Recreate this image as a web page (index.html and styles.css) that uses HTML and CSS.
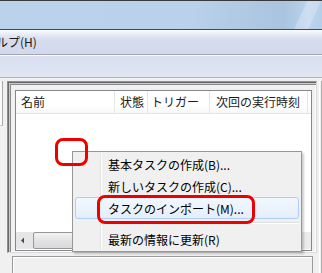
FILE: index.html
```html
<!DOCTYPE html>
<html lang="ja">
<head>
<meta charset="utf-8">
<link rel="stylesheet" href="styles.css">
</head>
<body>
<div class="window">
  <div class="titlebar"><div class="streak"></div></div>
  <div class="menubar"><span class="menu-item">ヘルプ(H)</span></div>
  <div class="toolbar"></div>
  <div class="content">
    <div class="leftpane"></div>
    <div class="results">
      <div class="listframe">
        <div class="listview">
          <div class="header">
            <div class="col c1">名前</div>
            <div class="col c2">状態</div>
            <div class="col c3">トリガー</div>
            <div class="col c4">次回の実行時刻</div>
            <div class="col c5"></div>
          </div>
          <div class="body"></div>
          <div class="hscroll">
            <div class="arrow left"><svg width="17" height="17" viewBox="0 0 17 17"><path d="M5 8.5 L8 5.5 L8 11.5 Z" fill="#4a4a4a"/></svg></div>
            <div class="thumb"></div>
            <div class="track"></div>
            <div class="arrow right"></div>
          </div>
        </div>
      </div>
      <div class="detailpane"></div>
    </div>
    <div class="rightpane"></div>
  </div>

  <div class="ctxmenu">
    <div class="gutter"></div>
    <div class="mi">基本タスクの作成(B)...</div>
    <div class="mi">新しいタスクの作成(C)...</div>
    <div class="mi hot">タスクのインポート(M)...</div>
    <div class="msep"></div>
    <div class="mi">最新の情報に更新(R)</div>
  </div>

  <div class="mark mark1"></div>
  <div class="mark mark2"></div>
</div>
</body>
</html>
```
FILE: styles.css
```css
* { box-sizing: border-box; }
html, body { margin: 0; padding: 0; }
body {
  width: 322px;
  height: 273px;
  overflow: hidden;
  background: #f0f0f0;
  font-family: "Noto Sans CJK JP", "Noto Sans", sans-serif;
  font-size: 12px;
  color: #000;
}
.window { position: relative; width: 322px; height: 273px; overflow: hidden; }

.titlebar {
  position: relative;
  height: 30px;
  border-top: 1px solid #3a3a3a;
  border-bottom: 1px solid #404b5a;
  background: linear-gradient(90deg, #bad2ea 0%, #b9d1ea 60%, #a9c4df 88%, #bcd4ec 96%, #b6cfe8 100%);
  overflow: hidden;
}
.streak {
  position: absolute;
  right: 10px; top: -10px;
  width: 14px; height: 60px;
  background: rgba(255,255,255,0.25);
  transform: skewX(-25deg);
}

.menubar {
  height: 25px;
  background: linear-gradient(#fbfcfe 0%, #e2e6f2 25%, #d5dbed 45%, #d3d9ec 100%);
  border-bottom: 1px solid #a3a6b2;
  display: flex;
  align-items: center;
  white-space: nowrap;
}
.menu-item { margin-left: -16px; line-height: 16px; color: #1a1a1a; }

.toolbar {
  height: 23px;
  border-top: 1px solid #fbfbfe;
  border-bottom: 1px solid #aeb2c3;
  background: linear-gradient(#d8dff0, #e2e6f4);
}

.content {
  display: flex;
  height: 195px;
  padding-top: 3px;
}
.leftpane {
  width: 3px;
  height: 45px;
  background: #fafafa;
  border-right: 1px solid #a8a8a8;
  border-bottom: 1px solid #c8c8c8;
}
.results {
  margin-left: 4px;
  width: 310px;
  display: flex;
  flex-direction: column;
}
.listframe {
  height: 172px;
  flex: none;
  border: 1px solid #8e8e8e;
  border-right-color: #d8d8d8;
  border-bottom-color: #d8d8d8;
  box-shadow: inset 1px 1px 0 #6a6a6a, inset 2px 2px 0 #c8c8c8, inset 3px 3px 0 #8a8a8a, inset -1px -1px 0 #ffffff;
  padding: 8px 4px 1px 7px;
  background: #f0f0f0;
}
.listview {
  height: 100%;
  background: #fff;
  border: 1px solid #828790;
  display: flex;
  flex-direction: column;
}
.header {
  display: flex;
  height: 23px;
  background: linear-gradient(#ffffff, #ffffff 60%, #f7f8fa);
  border-bottom: 1px solid #e5e5e5;
  flex: none;
}
.col {
  height: 100%;
  line-height: 22px;
  border-right: 1px solid #e3e6eb;
  white-space: nowrap;
  overflow: hidden;
  color: #1b1b1b;
}
.c1 { width: 99px; padding-left: 5px; }
.c2 { width: 33px; padding-left: 5px; }
.c3 { width: 62px; padding-left: 3px; }
.c4 { width: 98px; padding-left: 6px; }
.c5 { flex: 1; border-right: none; }
.body { flex: 1; }
.hscroll {
  flex: none;
  height: 17px;
  display: flex;
  background: linear-gradient(90deg, #e6e6e6, #f0f0f0);
  margin-bottom: 1px;
}
.arrow { width: 17px; height: 17px; flex: none; }
.thumb {
  width: 60px;
  border: 1px solid #979797;
  border-radius: 2px;
  background: linear-gradient(#f3f3f3, #e3e3e3 50%, #dadada);
}
.track { flex: 1; background: linear-gradient(#e3e3e3, #f0f0f0 20%, #f0f0f0 80%, #e3e3e3); }
.arrow.right { background: #ececec; }
.detailpane {
  margin-top: 3px;
  flex: 1;
  border: 1px solid #9a9a9a;
  border-bottom: none;
  background: #f0f0f0;
  margin-left: 5px;
  margin-right: 4px;
  box-shadow: inset 1px 1px 0 #fff;
}
.rightpane {
  margin-left: 2px;
  width: 3px;
  border-left: 1px solid #fff;
  border-right: 1px solid #b0b0b0;
  background: #f0f0f0;
}

.ctxmenu {
  position: absolute;
  left: 72px; top: 151px;
  width: 230px; height: 101px;
  background: #f0f0f0;
  border: 1px solid #979797;
  padding: 1px 2px;
  box-shadow: 2px 2px 2px rgba(0,0,0,0.2);
}
.gutter {
  position: absolute;
  left: 27px; top: 1px; bottom: 1px;
  width: 2px;
  border-left: 1px solid #e2e3e3;
  border-right: 1px solid #ffffff;
}
.mi {
  position: relative;
  height: 22px;
  line-height: 22px;
  padding-left: 32px;
  white-space: nowrap;
  border: 1px solid transparent;
  border-radius: 3px;
}
.mi.hot {
  border-color: #aecff7;
  background: linear-gradient(#f2f8fe, #e4eefb);
}
.msep {
  margin: 3px 0 4px 27px;
  height: 2px;
  border-top: 1px solid #e0e0e0;
  border-bottom: 1px solid #ffffff;
}

.mark {
  position: absolute;
  border: 3px solid #ee0000;
  border-radius: 8px;
}
.mark1 { left: 55px; top: 138px; width: 33px; height: 28px; }
.mark2 { left: 97px; top: 195px; width: 158px; height: 29px; }
```
